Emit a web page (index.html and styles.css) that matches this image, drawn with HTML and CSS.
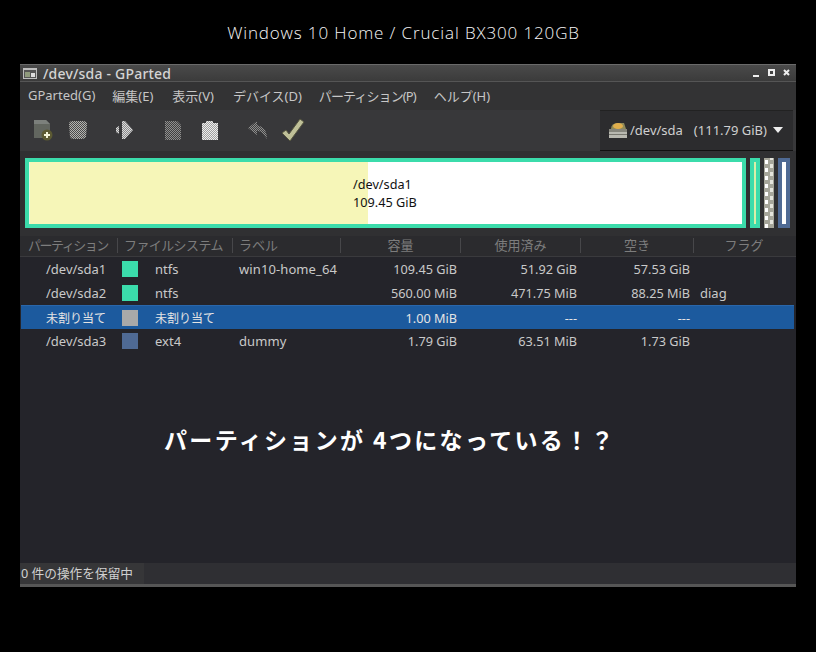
FILE: index.html
```html
<!DOCTYPE html>
<html lang="ja">
<head>
<meta charset="utf-8">
<title>/dev/sda - GParted</title>
<link rel="stylesheet" href="styles.css">
</head>
<body>
<svg class="defs" width="0" height="0" aria-hidden="true">
  <defs>
    <pattern id="dgrey" width="2" height="2" patternUnits="userSpaceOnUse"><rect width="2" height="2" fill="#4a4a4a"/><rect width="1" height="1" fill="#b4b4b0"/><rect x="1" y="1" width="1" height="1" fill="#b4b4b0"/></pattern>
    <pattern id="dlight" width="2" height="2" patternUnits="userSpaceOnUse"><rect width="2" height="2" fill="#8a8a8a"/><rect width="1" height="1" fill="#dcdcdc"/><rect x="1" y="1" width="1" height="1" fill="#dcdcdc"/></pattern>
    <pattern id="dmid" width="2" height="2" patternUnits="userSpaceOnUse"><rect width="2" height="2" fill="#404040"/><rect width="1" height="1" fill="#8e8e8e"/><rect x="1" y="1" width="1" height="1" fill="#8e8e8e"/></pattern>
    <pattern id="dwhite" width="2" height="2" patternUnits="userSpaceOnUse"><rect width="2" height="2" fill="#a0a0a0"/><rect width="1" height="1" fill="#eeeeee"/><rect x="1" y="1" width="1" height="1" fill="#eeeeee"/></pattern>
  </defs>
</svg>
<h1 class="caption">Windows 10 Home / Crucial BX300 120GB</h1>
<main class="window">
  <header class="titlebar">
    <svg class="app-icon" width="14" height="11" viewBox="0 0 14 11"><rect width="14" height="11" fill="#bdbdbd"/><rect x="1" y="2" width="12" height="8" fill="#555"/><rect x="2" y="4" width="5" height="5" fill="#8f9a7c"/><rect x="8" y="5" width="4" height="4" fill="#ddd"/></svg>
    <span class="title">/dev/sda - GParted</span>
    <span class="wm">
      <svg width="10" height="10" viewBox="0 0 10 10"><rect x="1" y="7" width="6" height="2" fill="#eee"/></svg>
      <svg width="10" height="10" viewBox="0 0 10 10"><path d="M1 1h7v7H1z M3 3v3h3V3z" fill="#eee" fill-rule="evenodd"/></svg>
      <svg width="10" height="10" viewBox="0 0 10 10"><path d="M2 2l5 5M7 2L2 7" stroke="#eee" stroke-width="2"/></svg>
    </span>
  </header>
  <nav class="menubar">
    <span class="menu m1">GParted(G)</span>
    <span class="menu m2">編集(E)</span>
    <span class="menu m3">表示(V)</span>
    <span class="menu m4">デバイス(D)</span>
    <span class="menu m5">パーティション(P)</span>
    <span class="menu">ヘルプ(H)</span>
  </nav>
  <section class="toolbar">
    <svg class="tool t-new" width="22" height="24" viewBox="0 0 22 24"><path d="M2 2h12l4 4v14H2z" fill="#62665f"/><path d="M2 2h12l4 4H2z" fill="#7c807c"/><circle cx="15" cy="17" r="5.5" fill="#5c5a33"/><path d="M12 17h6M15 14v6" stroke="#f2f2d8" stroke-width="2"/></svg>
    <svg class="tool t-del" width="20" height="22" viewBox="0 0 20 22"><path d="M1 5q0-3 4-3h10q4 0 4 3l-1 13q-1 2-4 2H6q-3 0-4-2z" fill="url(#dgrey)"/></svg>
    <svg class="tool t-resize" width="20" height="22" viewBox="0 0 20 22"><path d="M7 2h3l8 9-8 9H7z" fill="url(#dlight)"/><path d="M1 9l3-2v8l-3-2z" fill="url(#dlight)"/></svg>
    <svg class="tool t-copy" width="20" height="22" viewBox="0 0 20 22"><path d="M2 2h12l4 4v14q0 1-1 1H3q-1 0-1-1z" fill="url(#dmid)"/></svg>
    <svg class="tool t-paste" width="18" height="22" viewBox="0 0 18 22"><path d="M1 4h4V2h7v2h5v17H1z" fill="url(#dwhite)"/></svg>
    <svg class="tool t-undo" width="22" height="22" viewBox="0 0 22 22"><path d="M1 9l9-7v4q10 2 10 14l-4-5q-2-3-6-3v4z" fill="url(#dmid)"/></svg>
    <svg class="tool t-ok" width="24" height="24" viewBox="0 0 24 24"><path d="M1 15l4-3 3 4L19 1l4 3L9 23z" fill="#bfc098" stroke="#55553f" stroke-width="1"/></svg>
    <div class="device">
      <svg width="20" height="18" viewBox="0 0 20 18"><rect x="1" y="11" width="18" height="6" fill="#b8b8b0"/><rect x="1" y="13" width="18" height="1" fill="#77776f"/><rect x="1" y="8" width="18" height="3" fill="#85857c"/><path d="M3 8q0-6 7-6h6l2 6z" fill="#8f8a58"/><ellipse cx="10" cy="5" rx="5" ry="3" fill="#e0ae4c"/></svg>
      <span class="dev-name">/dev/sda</span>
      <span class="dev-size">(111.79 GiB)</span>
      <span class="caret"></span>
    </div>
  </section>
  <section class="diskmap">
    <div class="part sda1">
      <div class="used"></div>
      <div class="free"></div>
      <div class="part-label">/dev/sda1<br>109.45 GiB</div>
    </div>
    <div class="part sda2"><div class="sliver"></div></div>
    <div class="part unalloc"></div>
    <div class="part sda3"><div class="inner"></div></div>
  </section>
  <section class="list">
    <div class="row head">
      <span class="h hp">パーティション</span>
      <span class="h hf">ファイルシステム</span>
      <span class="h hl">ラベル</span>
      <span class="h hc">容量</span>
      <span class="h hc">使用済み</span>
      <span class="h hc">空き</span>
      <span class="h hc">フラグ</span>
    </div>
    <div class="row"><span class="c-part">/dev/sda1</span><span class="c-fs"><i class="sw green"></i>ntfs</span><span class="c-label">win10-home_64</span><span class="num">109.45 GiB</span><span class="num">51.92 GiB</span><span class="num">57.53 GiB</span><span class="flag"></span></div>
    <div class="row"><span class="c-part">/dev/sda2</span><span class="c-fs"><i class="sw green"></i>ntfs</span><span class="c-label"></span><span class="num">560.00 MiB</span><span class="num">471.75 MiB</span><span class="num">88.25 MiB</span><span class="flag">diag</span></div>
    <div class="row selected"><span class="c-part">未割り当て</span><span class="c-fs"><i class="sw grey"></i>未割り当て</span><span class="c-label"></span><span class="num">1.00 MiB</span><span class="num">---</span><span class="num">---</span><span class="flag"></span></div>
    <div class="row"><span class="c-part">/dev/sda3</span><span class="c-fs"><i class="sw blue"></i>ext4</span><span class="c-label">dummy</span><span class="num">1.79 GiB</span><span class="num">63.51 MiB</span><span class="num">1.73 GiB</span><span class="flag"></span></div>
  </section>
  <footer class="statusbar"><span class="status-text">0 件の操作を保留中</span></footer>
  <p class="note">パーティションが 4つになっている！？</p>
</main>
</body>
</html>
```

FILE: styles.css
```css
* { box-sizing: border-box; }
html, body { margin: 0; height: 100%; }
body {
  background: #000;
  overflow: hidden;
  font-family: "Noto Sans", "Noto Sans CJK JP", sans-serif;
  font-size: 13px;
  color: #c9c9c9;
}
.defs { position: absolute; }
.caption {
  margin: 0;
  height: 64px;
  padding: 21px 9px 0 0;
  text-align: center;
  font-family: "Open Sans", sans-serif;
  font-weight: 300;
  font-size: 17px;
  line-height: 24px;
  letter-spacing: 0.87px;
  color: #f6f6f6;
}
.window {
  position: relative;
  margin-left: 20px;
  width: 776px;
  height: 523px;
  display: flex;
  flex-direction: column;
  background: #24242a;
}
.titlebar {
  height: 18px;
  flex: none;
  display: flex;
  align-items: center;
  padding: 0 4px 0 3px;
  background: linear-gradient(#4a4a4a, #3b3b3b);
  border-top: 1px solid #6a6a6a;
  border-bottom: 1px solid #555;
}
.app-icon { margin-right: 6px; }
.title { font-size: 14px; font-weight: 500; letter-spacing: 0.2px; color: #d4d4d4; }
.wm { margin-left: auto; display: flex; gap: 5px; }
.menubar {
  height: 28px;
  flex: none;
  display: flex;
  align-items: center;
  padding: 0 0 2px 8px;
  background: #333334;
  font-size: 13px;
  color: #c6c6c6;
}
.menu { white-space: nowrap; }
.m1 { margin-right: 17px; }
.m2 { margin-right: 19px; }
.m3 { margin-right: 19px; }
.m4 { margin-right: 17px; }
.m5 { margin-right: 18px; letter-spacing: -0.9px; }
.toolbar {
  height: 41px;
  flex: none;
  display: flex;
  align-items: center;
  padding: 0 0 1px 12px;
  background: #38383a;
}
.tool { flex: none; }
.t-new { margin-right: 14px; }
.t-del { margin-right: 27px; }
.t-resize { margin-right: 28px; }
.t-copy { margin-right: 18px; }
.t-paste { margin-right: 28px; }
.t-undo { margin-right: 12px; }
.device {
  margin-left: auto;
  margin-right: 3px;
  width: 193px;
  height: 41px;
  display: flex;
  align-items: center;
  padding-left: 8px;
  background: #2c2c2e;
  border-top: 1px solid #222;
  border-bottom: 1px solid #111;
  color: #d0d0d0;
}
.dev-name { margin-left: 2px; }
.dev-size { margin-left: 11px; }
.caret {
  margin-left: 6px;
  width: 0;
  height: 0;
  border: 5px solid transparent;
  border-top: 6px solid #eee;
  border-bottom: 0;
}
.diskmap {
  height: 85px;
  flex: none;
  display: flex;
  align-items: stretch;
  padding: 7px 6px 8px 5px;
  background: #303032;
}
.part { position: relative; }
.sda1 {
  width: 721px;
  display: flex;
  border: 4px solid #3bdcab;
  color: #000;
}
.used { width: 339px; background: #f6f6b8; border-left: 1px solid #eef6e0; }
.free { flex: 1; background: #fff; }
.part-label {
  position: absolute;
  left: 324px;
  top: 13px;
  font-size: 12.7px;
  line-height: 18px;
  white-space: nowrap;
  color: #111;
}
.sda2 { width: 10px; margin-left: 4px; background: #3bdcab; display: flex; justify-content: center; }
.sliver { width: 2px; margin: 4px 0; background: #d9eea8; }
.unalloc {
  width: 10px;
  margin-left: 4px;
  background-color: #a6a69a;
  background-image: linear-gradient(#fff 50%, transparent 50%), linear-gradient(#e4e4dc 50%, transparent 50%);
  background-size: 3px 8px, 3px 8px;
  background-position: 1px 2px, 6px 6px;
  background-repeat: repeat-y, repeat-y;
}
.sda3 { width: 12px; margin-left: 4px; background: #4f6a94; padding: 4px; }
.inner { height: 100%; width: 4px; background: #fff; }
.list { flex: 1; display: flex; flex-direction: column; }
.row {
  display: grid;
  grid-template-columns: 98px 115px 108px 120px 120px 113px 100px;
  height: 24px;
  align-items: center;
  white-space: nowrap;
  font-size: 13px;
  color: #c9c9c9;
  flex: none;
}
.head {
  height: 21px;
  background: #2b2b2e;
  border-bottom: 1px solid #3a3a3d;
  color: #7d7d7d;
  padding-bottom: 2px;
}
.h { height: 15px; line-height: 15px; border-right: 1px solid #47474a; }
.hp { padding-left: 8px; letter-spacing: -1.5px; }
.hf { padding-left: 6px; letter-spacing: -0.6px; }
.hl { padding-left: 6px; }
.hc { text-align: center; }
.hc:last-child { border-right: 0; }
.c-part { padding-left: 26px; }
.c-fs { display: flex; align-items: center; padding-left: 4px; }
.c-label { padding-left: 6px; letter-spacing: 0.1px; }
.num { text-align: right; padding-right: 4px; font-size: 12.7px; }
.flag { padding-left: 6px; }
.sw { width: 16px; height: 16px; margin-right: 17px; flex: none; display: block; }
.green { background: #3bdcab; }
.grey { background: #a9a9a9; }
.blue { background: #4f6a94; }
.selected {
  margin: 0 2px 0 1px;
  grid-template-columns: 97px 115px 108px 120px 120px 113px 98px;
  background: #1c5a9e;
  color: #e4e4e4;
  border-top: 1px solid #2a67ab;
}
.selected .c-part { padding-left: 25px; font-size: 12px; }
.selected .c-fs { font-size: 12px; }
.statusbar {
  height: 24px;
  flex: none;
  margin-top: auto;
  display: flex;
  font-size: 12.7px;
  color: #d0d0d0;
  background: #2f2f33;
  border-bottom: 3px solid #565656;
}
.status-text {
  width: 124px;
  padding-left: 1px;
  line-height: 21px;
  background: #363638;
  white-space: nowrap;
}
.note {
  position: absolute;
  left: 144px;
  top: 360px;
  margin: 0;
  font-family: "Noto Sans CJK JP", sans-serif;
  font-weight: 700;
  font-size: 23px;
  line-height: 30px;
  letter-spacing: 2.35px;
  white-space: nowrap;
  color: #fff;
}
```
